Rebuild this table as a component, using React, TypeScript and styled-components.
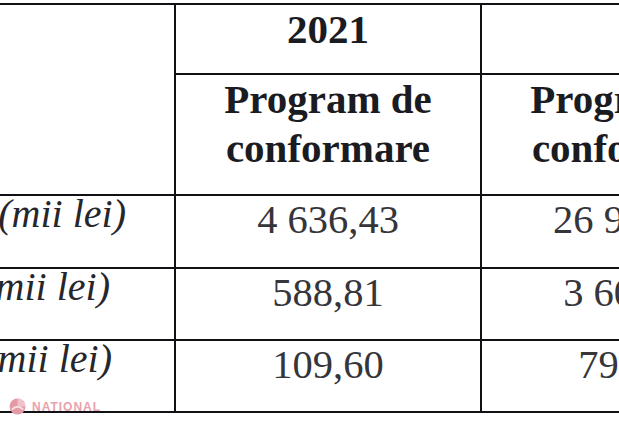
import styled, { createGlobalStyle } from "styled-components";

const GlobalStyle = createGlobalStyle`
  html, body {
    margin: 0;
    padding: 0;
    background: #ffffff;
  }
  body {
    font-family: "Liberation Serif", "Times New Roman", serif;
  }
`;

type DataRow = {
  label: string;
  labelInset: number;
  first: string;
  second: string;
};

const rows: DataRow[] = [
  { label: "(mii lei)", labelInset: 48, first: "4 636,43", second: "26 912,50" },
  { label: "(mii lei)", labelInset: 64, first: "588,81", second: "3 605,20" },
  { label: "(mii lei)", labelInset: 62, first: "109,60", second: "795,40" },
];

export default function App() {
  return (
    <>
      <GlobalStyle />
      <Page>
        <Table>
          <Corner />
          <YearCell>2021</YearCell>
          <YearCell />
          <HeadCell>
            Program de
            <br />
            conformare
          </HeadCell>
          <HeadCell>
            Program de
            <br />
            conformare
          </HeadCell>
          {rows.map((row, i) => (
            <Row key={i}>
              <LabelCell $inset={row.labelInset}>
                <span>{row.label}</span>
              </LabelCell>
              <ValueCell>{row.first}</ValueCell>
              <ValueCell>{row.second}</ValueCell>
            </Row>
          ))}
        </Table>
        <Watermark>
          <svg width="17" height="17" viewBox="0 0 16 16">
            <circle cx="8" cy="8" r="7.5" fill="#e39aa5" />
            <path d="M8 0.5 A7.5 7.5 0 0 1 15.5 8 L8 8 Z" fill="#f0c2c9" />
            <path d="M2.5 11 Q8 5.5 13.5 11" stroke="#f7dde1" strokeWidth="1.6" fill="none" />
          </svg>
          <WatermarkText>NATIONAL</WatermarkText>
        </Watermark>
      </Page>
    </>
  );
}

const Page = styled.div`
  position: relative;
  width: 619px;
  height: 421px;
  overflow: hidden;
  padding-top: 3px;
  box-sizing: border-box;
`;

const Table = styled.div`
  display: grid;
  grid-template-columns: 174px 304px 304px;
  grid-template-rows: 68px 119px 71px 70px 70px;
  gap: 2px;
  padding: 2px 2px 2px 0;
  width: max-content;
  background: #111115;
`;

const Cell = styled.div`
  background: #ffffff;
  text-align: center;
  font-size: 40px;
`;

const Corner = styled(Cell)`
  grid-row: span 2;
`;

const YearCell = styled(Cell)`
  font-size: 41px;
  font-weight: 700;
  line-height: 46px;
  padding-top: 1px;
  color: #1b1b22;
`;

const HeadCell = styled(Cell)`
  font-size: 41px;
  font-weight: 700;
  line-height: 49px;
  color: #1b1b22;
`;

const Row = styled.div`
  display: contents;
`;

const LabelCell = styled(Cell)<{ $inset: number }>`
  display: flex;
  justify-content: flex-end;
  overflow: hidden;
  white-space: nowrap;
  font-style: italic;
  line-height: 35px;
  color: #26262b;
  padding-right: ${({ $inset }) => $inset}px;
`;

const ValueCell = styled(Cell)`
  font-size: 40.5px;
  line-height: 46px;
  padding-top: 1px;
  color: #35353a;
  white-space: nowrap;
`;

const Watermark = styled.div`
  position: absolute;
  left: 9px;
  top: 398px;
  display: flex;
  align-items: center;
  gap: 6px;
`;

const WatermarkText = styled.span`
  font-family: "Liberation Sans", Arial, sans-serif;
  font-weight: 700;
  font-size: 12px;
  letter-spacing: 1px;
  color: #e8a2ad;
`;
